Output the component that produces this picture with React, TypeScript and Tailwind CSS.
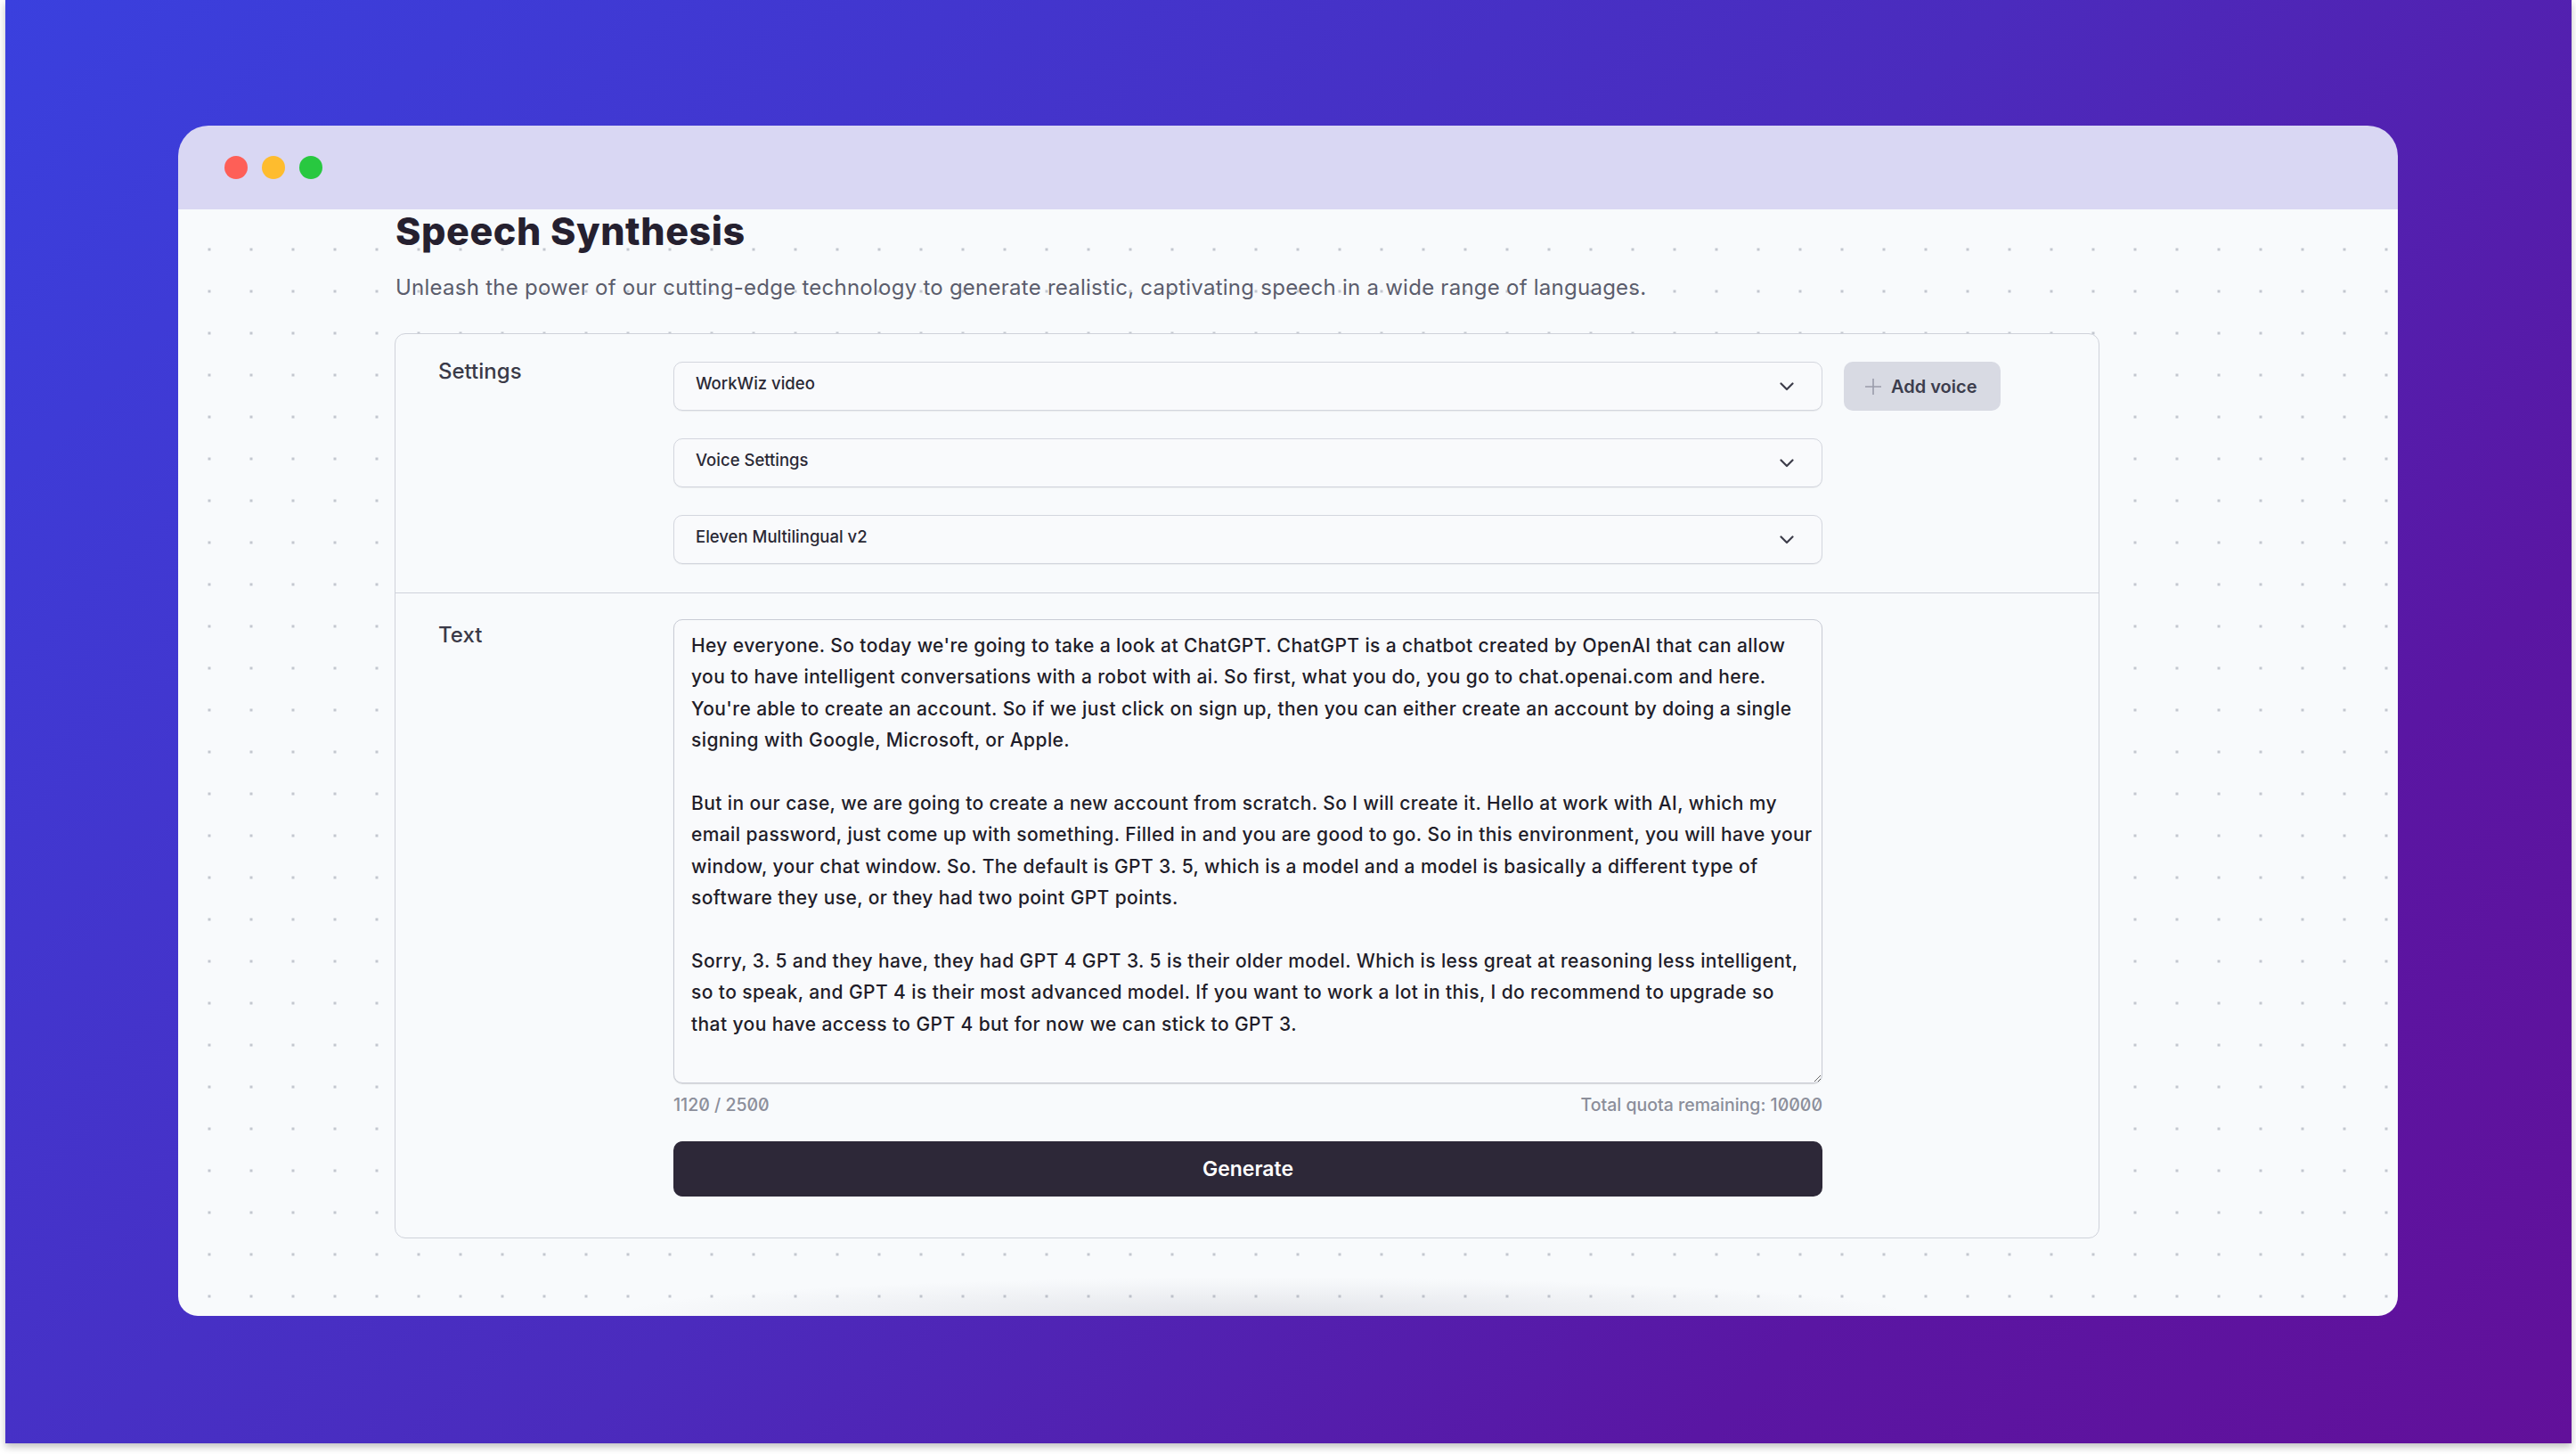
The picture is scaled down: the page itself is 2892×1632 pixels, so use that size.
import React from 'react';

const TRANSCRIPT = `Hey everyone. So today we're going to take a look at ChatGPT. ChatGPT is a chatbot created by OpenAI that can allow you to have intelligent conversations with a robot with ai. So first, what you do, you go to chat.openai.com and here. You're able to create an account. So if we just click on sign up, then you can either create an account by doing a single signing with Google, Microsoft, or Apple.

But in our case, we are going to create a new account from scratch. So I will create it. Hello at work with AI, which my email password, just come up with something. Filled in and you are good to go. So in this environment, you will have your window, your chat window. So. The default is GPT 3. 5, which is a model and a model is basically a different type of software they use, or they had two point GPT points.

Sorry, 3. 5 and they have, they had GPT 4 GPT 3. 5 is their older model. Which is less great at reasoning less intelligent, so to speak, and GPT 4 is their most advanced model. If you want to work a lot in this, I do recommend to upgrade so that you have access to GPT 4 but for now we can stick to GPT 3.`;

const Chevron: React.FC = () => (
  <svg width="16" height="10" viewBox="0 0 16 10" fill="none">
    <polyline points="1.5,1.5 8,8 14.5,1.5" stroke="#3d3d4a" strokeWidth="2.2" strokeLinecap="round" strokeLinejoin="round" />
  </svg>
);

const SelectBox: React.FC<{ label: string }> = ({ label }) => (
  <button className="flex items-center justify-between h-[55px] w-full pl-[24px] pr-[31px] rounded-[10px] border border-[#d3d6de] bg-[#f9fafc] shadow-[0_1px_1px_rgba(0,0,0,0.06)] text-[18.5px] font-medium text-[#2a2935]">
    <span className="mb-[5px]">{label}</span>
    <Chevron />
  </button>
);

const App: React.FC = () => {
  return (
    <div className="w-[2892px] h-[1632px] bg-white font-['Inter'] overflow-hidden">
      {/* Wallpaper */}
      <div className="ml-[6px] mr-[5px] h-[1620px] pt-[141px] pl-[194px] bg-[linear-gradient(135deg,#3a40de_0%,#4b2bbd_50%,#5a16a3_78%,#62109a_100%)] shadow-[0_4px_8px_rgba(0,0,0,0.25)]">
        {/* Window */}
        <div className="relative w-[2492px] h-[1336px] flex flex-col rounded-t-[34px] rounded-b-[22px] overflow-hidden">
          <div className="h-[94px] shrink-0 bg-[#d9d7f3] flex items-center pl-[52px] gap-[16px]">
            <span className="w-[26px] h-[26px] rounded-full bg-[#fe5f57]" />
            <span className="w-[26px] h-[26px] rounded-full bg-[#febc2e]" />
            <span className="w-[26px] h-[26px] rounded-full bg-[#28c840]" />
          </div>

          <div className="flex-1 bg-[#f8fafc] bg-[radial-gradient(circle,#c3c7cf_1.4px,transparent_2px)] bg-[size:47px_47px] bg-[position:11.5px_21.5px] pl-[243px]">
            <h1 className="pl-[1px] text-[43px] leading-[48px] font-extrabold tracking-[0.6px] text-[#25202f]">Speech Synthesis</h1>
            <p className="pl-[1px] mt-[24px] text-[24px] leading-[32px] tracking-[0.25px] text-[#5b5d6c]">
              Unleash the power of our cutting-edge technology to generate realistic, captivating speech in a wide range of languages.
            </p>

            {/* Card */}
            <div className="mt-[35px] w-[1914px] h-[1016px] rounded-[12px] border border-[#cfd2da] bg-[#f8fafc]">
              <div className="flex pl-[48px] pt-[31px] pb-[32px] border-b border-[#cfd2da]">
                <div className="w-[264px] -mt-[5px] text-[24px] leading-[32px] font-medium text-[#3a3a48]">Settings</div>
                <div className="w-[1290px] flex flex-col gap-[31px]">
                  <SelectBox label="WorkWiz video" />
                  <SelectBox label="Voice Settings" />
                  <SelectBox label="Eleven Multilingual v2" />
                </div>
                <div className="ml-[24px]">
                  <button className="flex items-center h-[55px] w-[176px] pl-[23px] gap-[10px] rounded-[10px] bg-[#d8dae3] text-[20px] font-semibold text-[#3c3d4d]">
                    <svg width="20" height="20" viewBox="0 0 20 20" fill="none">
                      <path d="M10 1v18M1 10h18" stroke="#9a9cab" strokeWidth="1.6" />
                    </svg>
                    Add voice
                  </button>
                </div>
              </div>

              <div className="flex pl-[48px] pt-[29px]">
                <div className="w-[264px] text-[24px] leading-[32px] font-medium text-[#3a3a48] pt-[2px]">Text</div>
                <div className="w-[1290px] flex flex-col">
                  <textarea
                    defaultValue={TRANSCRIPT}
                    className="h-[521px] w-full pl-[19px] pr-[8px] pt-[11px] rounded-[10px] border border-[#c9ccd5] bg-[#f9fafc] shadow-[0_1px_1px_rgba(0,0,0,0.12)] text-[21px] leading-[35.4px] tracking-[0.4px] font-medium text-[#1f1d29] outline-none"
                  />
                  <div className="mt-[12px] flex justify-between text-[19.5px] leading-[24px] font-medium text-[#8b8e9a] slashed-zero">
                    <span>1120 / 2500</span>
                    <span>Total quota remaining: 10000</span>
                  </div>
                  <button className="mt-[29px] h-[62px] w-full rounded-[10px] bg-[#2d2838] text-white text-[23px] font-semibold">
                    Generate
                  </button>
                </div>
              </div>
            </div>
          </div>

          {/* soft shadow along bottom edge */}
          <div className="absolute bottom-0 left-[480px] w-[1480px] h-[44px] bg-[radial-gradient(ellipse_at_bottom,rgba(110,110,130,0.16),transparent_70%)] pointer-events-none" />
        </div>
      </div>
    </div>
  );
};

export default App;
